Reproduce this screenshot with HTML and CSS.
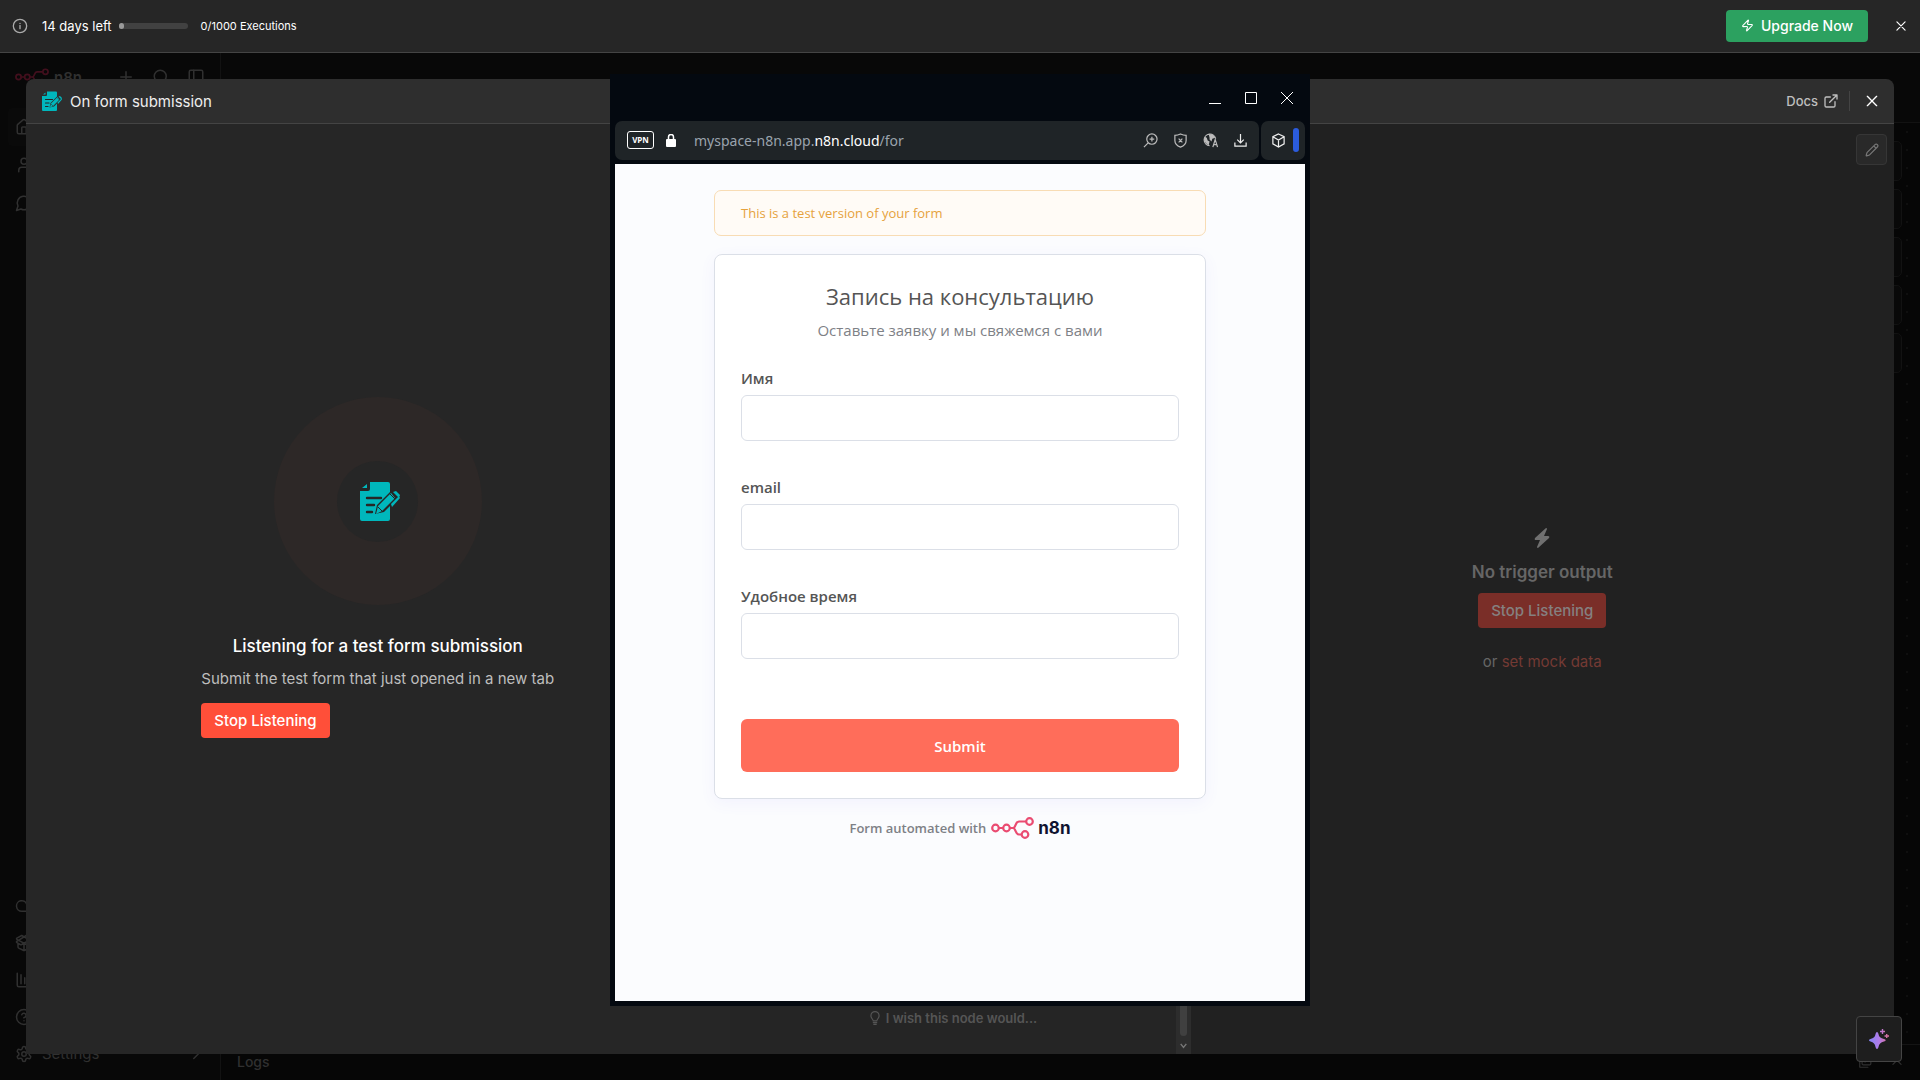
FILE: index.html
```html
<!DOCTYPE html>
<html lang="en">
<head>
    <meta charset="UTF-8">
    <meta name="viewport" content="width=device-width, initial-scale=1.0">
    <title>n8n</title>
    <link rel="stylesheet" href="styles.css">
</head>
<body>
    <!-- shared icons -->
    <svg class="sprite" aria-hidden="true">
        <symbol id="form-icon" viewBox="0 0 40 40">
            <path fill="#00b7bc" d="M10 1h18a2 2 0 0 1 2 2v8L17 24l-2 9 9-2 6-6v13a2 2 0 0 1-2 2H2a2 2 0 0 1-2-2V10h8a2 2 0 0 0 2-2zM7 3v4H2z"/>
            <path class="form-lines" d="M7 17h14M7 24h7M7 31h5" stroke-width="2.400" stroke-linecap="round"/>
            <path fill="#00b7bc" d="M31 12l4 5-13 13-6 3 2-8zM33 11l3-1 4 4-1 3zM31 23l8-8 1 2-8 9z"/>
            <path class="form-lines" d="M18 26l4 4M30 13l5 5" stroke-width="1"/>
        </symbol>
        <symbol id="n8n-mark" viewBox="0 0 43 22">
            <g fill="none" stroke="currentColor" stroke-width="2.200">
                <circle cx="4.500" cy="11" r="3.300"/>
                <circle cx="15.500" cy="11" r="3.300"/>
                <circle cx="38.500" cy="4.500" r="3.300"/>
                <circle cx="34" cy="17.500" r="3.300"/>
                <path d="M8 11h4M19 11h3c3 0 2-6.500 6-6.500h7M22 11c3 0 2 6.500 6 6.500h2.500"/>
            </g>
        </symbol>
        <symbol id="close" viewBox="0 0 24 24">
            <path d="M5 5l14 14M19 5L5 19"/>
        </symbol>
    </svg>

    <div class="trial-banner">
        <svg class="icon info" viewBox="0 0 24 24"><circle cx="12" cy="12" r="10"/><path d="M12 16v-5M12 8v.1"/></svg>
        <span class="days">14 days left</span>
        <span class="progress"><span class="progress-value"></span></span>
        <span class="executions">0/1000 Executions</span>
        <button class="upgrade"><svg class="icon" viewBox="0 0 24 24"><path d="M4 14a1 1 0 0 1-.8-1.600L13 2.300a.5.5 0 0 1 .9.500L12 8.800a1 1 0 0 0 1 1.200h7a1 1 0 0 1 .8 1.600L11 21.700a.5.5 0 0 1-.9-.500l1.900-6a1 1 0 0 0-1-1.200z"/></svg>Upgrade Now</button>
        <button class="plain banner-close" aria-label="Close"><svg class="icon"><use href="#close"/></svg></button>
    </div>

    <div class="app">
        <nav class="sidebar">
            <div class="sidebar-head">
                <svg class="side-logo"><use href="#n8n-mark"/></svg>
                <span class="side-name">n8n</span>
                <svg class="icon" viewBox="0 0 24 24"><path d="M5 12h14M12 5v14"/></svg>
                <svg class="icon" viewBox="0 0 24 24"><circle cx="11" cy="11" r="8"/><path d="M21 21l-4.300-4.300"/></svg>
                <svg class="icon" viewBox="0 0 24 24"><rect x="3" y="3" width="18" height="18" rx="2"/><path d="M9 3v18"/></svg>
            </div>
            <a href="#" class="side-item active" aria-label="Overview"><svg class="icon" viewBox="0 0 24 24"><path d="M15 21v-8a1 1 0 0 0-1-1h-4a1 1 0 0 0-1 1v8M3 10a2 2 0 0 1 .7-1.500l7-6a2 2 0 0 1 2.600 0l7 6a2 2 0 0 1 .7 1.500v9a2 2 0 0 1-2 2H5a2 2 0 0 1-2-2z"/></svg></a>
            <a href="#" class="side-item" aria-label="Personal"><svg class="icon" viewBox="0 0 24 24"><circle cx="12" cy="7" r="4"/><path d="M19 21v-2a4 4 0 0 0-4-4H9a4 4 0 0 0-4 4v2"/></svg></a>
            <a href="#" class="side-item" aria-label="Chat"><svg class="icon" viewBox="0 0 24 24"><path d="M7.900 20A9 9 0 1 0 4 16.100L2 22z"/></svg></a>
            <a href="#" class="side-item first-bottom" aria-label="Admin Panel"><svg class="icon" viewBox="0 0 24 24"><path d="M17.500 19H9a7 7 0 1 1 6.700-9h1.800a4.500 4.500 0 1 1 0 9z"/></svg></a>
            <a href="#" class="side-item" aria-label="Templates"><svg class="icon" viewBox="0 0 24 24"><path d="M12 22v-9M15 2l6 3.500a1 1 0 0 1 0 1.700L8.800 14a2 2 0 0 1-1.700 0L2.500 11.500a1 1 0 0 1 0-1.800zM20 13v4a2 2 0 0 1-1 1.800L13 21.700a2 2 0 0 1-2 0L5 18.800A2 2 0 0 1 4 17v-4M9 2L2.500 5.500a1 1 0 0 0 0 1.700L15 14l6.500-3a1 1 0 0 0 0-1.700z"/></svg></a>
            <a href="#" class="side-item" aria-label="Insights"><svg class="icon" viewBox="0 0 24 24"><path d="M3 3v16a2 2 0 0 0 2 2h16M8 17V5M13 17V9M18 17v-3"/></svg></a>
            <a href="#" class="side-item" aria-label="Help"><svg class="icon" viewBox="0 0 24 24"><circle cx="12" cy="12" r="10"/><path d="M9 9a3 3 0 0 1 5.800 1c0 2-3 3-3 3M12 17v.1"/></svg></a>
            <a href="#" class="side-item"><svg class="icon" viewBox="0 0 24 24"><path d="M12.200 2h-.4a2 2 0 0 0-2 2v.2a2 2 0 0 1-1 1.700l-.4.300a2 2 0 0 1-2 0l-.2-.100a2 2 0 0 0-2.700.700l-.2.400a2 2 0 0 0 .7 2.700l.2.100a2 2 0 0 1 1 1.700v.6a2 2 0 0 1-1 1.700l-.2.100a2 2 0 0 0-.7 2.700l.2.400a2 2 0 0 0 2.700.700l.2-.100a2 2 0 0 1 2 0l.4.300a2 2 0 0 1 1 1.700v.2a2 2 0 0 0 2 2h.4a2 2 0 0 0 2-2v-.2a2 2 0 0 1 1-1.700l.4-.300a2 2 0 0 1 2 0l.2.100a2 2 0 0 0 2.700-.700l.2-.400a2 2 0 0 0-.7-2.700l-.2-.100a2 2 0 0 1-1-1.700v-.6a2 2 0 0 1 1-1.700l.2-.100a2 2 0 0 0 .7-2.700l-.2-.400a2 2 0 0 0-2.700-.700l-.2.100a2 2 0 0 1-2 0l-.4-.300a2 2 0 0 1-1-1.700V4a2 2 0 0 0-2-2z"/><circle cx="12" cy="12" r="3"/></svg>Settings<svg class="icon chevron" viewBox="0 0 24 24"><path d="M9 18l6-6-6-6"/></svg></a>
        </nav>
        <main class="workflow">
            <div class="workflow-head"></div>
            <div class="canvas">
                <span class="canvas-btn"></span>
                <span class="canvas-btn"></span>
                <span class="canvas-btn"></span>
                <span class="canvas-btn"></span>
                <span class="canvas-btn"></span>
            </div>
            <div class="logs">
                <span>Logs</span>
                <svg class="icon" viewBox="0 0 24 24"><rect x="7" y="2" width="15" height="15" rx="2"/><path d="M3 7v13a1 1 0 0 0 1 1h13M12 12l6-6M13 6h5v5"/></svg>
                <svg class="icon" viewBox="0 0 24 24"><path d="M5 16l7-7 7 7"/></svg>
            </div>
        </main>

        <section class="node-modal">
            <header class="node-head">
                <svg class="node-icon"><use href="#form-icon"/></svg>
                <h1>On form submission</h1>
                <a href="#" class="docs">Docs <svg class="icon" viewBox="0 0 24 24"><path d="M15 3h6v6M10 14L21 3M18 13v6a2 2 0 0 1-2 2H5a2 2 0 0 1-2-2V8a2 2 0 0 1 2-2h6"/></svg></a>
                <button class="plain node-close" aria-label="Close"><svg class="icon"><use href="#close"/></svg></button>
            </header>
            <div class="panels">
                <div class="panel input-panel">
                    <div class="pulse"><div class="pulse-inner"><svg class="pulse-icon"><use href="#form-icon"/></svg></div></div>
                    <div class="listening">
                        <h2>Listening for a test form submission</h2>
                        <p>Submit the test form that just opened in a new tab</p>
                        <button class="stop">Stop Listening</button>
                    </div>
                </div>
                <div class="panel params-panel">
                    <a href="#" class="wish"><svg class="icon" viewBox="0 0 24 24"><path d="M9 17c0-3-4-4-4-9a7 7 0 0 1 14 0c0 5-4 6-4 9zM9 20h6M10 23h4"/></svg>I wish this node would...</a>
                    <div class="scrollbar">
                        <span class="thumb"></span>
                        <svg class="scroll-arrow" viewBox="0 0 10 10"><path d="M1 2l4 5 4-5"/></svg>
                    </div>
                </div>
                <div class="panel output-panel">
                    <button class="edit" aria-label="Edit output"><svg class="icon" viewBox="0 0 24 24"><path d="M21.200 6.800a1 1 0 0 0-4-4L3.800 16.200a2 2 0 0 0-.5.800L2 21.400a.5.5 0 0 0 .6.600L7 20.700a2 2 0 0 0 .8-.500zM15 5l4 4"/></svg></button>
                    <div class="no-output">
                        <svg class="bolt" viewBox="0 0 16 20"><path d="M12 0L1 10q-1 2 1 2h4l-3 7q0 1 1 1L15 10q1-2-1-2h-4l3-7q0-1-1-1z"/></svg>
                        <h2>No trigger output</h2>
                        <button class="stop">Stop Listening</button>
                        <p>or <a href="#">set mock data</a></p>
                    </div>
                </div>
            </div>
        </section>

        <button class="assistant" aria-label="Assistant">
            <svg viewBox="0 0 20 20">
                <defs>
                    <linearGradient id="ai" x1="0" y1="0" x2="20" y2="0" gradientUnits="userSpaceOnUse">
                        <stop offset="0" stop-color="#8585f5"/>
                        <stop offset=".5" stop-color="#b07be8"/>
                        <stop offset="1" stop-color="#dc6f91"/>
                    </linearGradient>
                </defs>
                <path fill="url(#ai)" d="M8 3q1 0 1.300 1.500Q10 9 15 10q1.700.5 1.700 1.200T15 12.500Q10 13.500 9.500 18q-.5 2-1.500 2t-1.500-2Q6 13.500 1.500 12.500 0 12 0 11.300T1.500 10Q6 9 6.700 4.500 7 3 8 3zM12.800 0h1.400v1.800H16v1.400h-1.800V5h-1.400V3.200H11V1.800h1.800zM17 5h1.400v1.300H20v1.400h-1.600V9H17V7.700h-1.500V6.300H17z"/>
            </svg>
        </button>
    </div>

    <!-- popup browser window -->
    <div class="browser">
        <div class="titlebar">
            <button class="plain" aria-label="Minimize"><svg viewBox="0 0 12 12"><path d="M0 11.500h12"/></svg></button>
            <button class="plain" aria-label="Maximize"><svg viewBox="0 0 12 12"><path d="M.5.500h11v11H.5z"/></svg></button>
            <button class="plain" aria-label="Close window"><svg viewBox="0 0 12 12"><path d="M0 0l12 12M12 0L0 12"/></svg></button>
        </div>
        <div class="toolbar">
            <div class="address">
                <span class="vpn">VPN</span>
                <svg class="lock" viewBox="0 0 10 13"><rect y="5" width="10" height="8" rx="1"/><path d="M2.500 6V3a2.500 2.500 0 0 1 5 0v3"/></svg>
                <span class="url">myspace-n8n.app.<b>n8n.cloud</b>/for</span>
                <svg class="tool" viewBox="0 0 16 16"><circle cx="9.500" cy="6.500" r="5.500"/><path d="M5.500 10.500L1 15M7 6.500h5M9.500 4v5"/></svg>
                <svg class="tool" viewBox="0 0 16 16"><path d="M8 1q3 1.500 6 1.500V8q0 5-6 7-6-2-6-7V2.500Q5 2.500 8 1zM6 6l4 4M10 6l-4 4"/></svg>
                <svg class="tool" viewBox="0 0 16 16"><path d="M13.500 6A6.200 6.200 0 1 0 7 13.500M10.500 15l2.500-8 2.500 8M11 12.500h4"/><path class="solid" d="M2 4l2 1 1 3 2 1-1 4-3-2-2-4zM6 1l5 1 2 3-3 1-1 3-2-2V5z"/></svg>
                <svg class="tool bright" viewBox="0 0 16 16"><path d="M8 1v9M4.500 7L8 10.500 11.500 7M2 10v4h12v-4"/></svg>
            </div>
            <div class="extensions">
                <svg class="tool bright" viewBox="0 0 16 16"><path d="M8 1l6 3v7.500L8 15l-6-3.500V4zM2 4l6 3.500L14 4M8 7.500V15"/></svg>
                <span class="ext-bar"></span>
            </div>
        </div>
        <div class="page">
            <div class="test-notice">This is a test version of your form</div>
            <form class="card" lang="ru">
                <h2>Запись на консультацию</h2>
                <p class="subtitle">Оставьте заявку и мы свяжемся с вами</p>
                <div class="field">
                    <label for="name">Имя</label>
                    <input type="text" id="name">
                </div>
                <div class="field">
                    <label for="email">email</label>
                    <input type="text" id="email">
                </div>
                <div class="field">
                    <label for="time">Удобное время</label>
                    <input type="text" id="time">
                </div>
                <button type="button" class="submit">Submit</button>
            </form>
            <a href="#" class="powered">Form automated with <svg class="powered-logo"><use href="#n8n-mark"/></svg><span>n8n</span></a>
        </div>
    </div>
</body>
</html>
```

FILE: styles.css
```css
* {
    margin: 0;
    padding: 0;
    box-sizing: border-box;
}
body {
    font-family: Inter, sans-serif;
    font-size: 15px;
    background: #070707;
    color: #fff;
    display: flex;
    flex-direction: column;
    height: 100vh;
    overflow: hidden;
    position: relative;
}
a {
    color: inherit;
    text-decoration: none;
}
button {
    font-family: inherit;
    border: none;
    cursor: pointer;
}
.plain {
    background: none;
    color: inherit;
    display: flex;
}
.sprite {
    position: absolute;
    width: 0;
    height: 0;
}
.icon {
    width: 18px;
    height: 18px;
    flex: none;
    fill: none;
    stroke: currentColor;
    stroke-width: 2;
    stroke-linecap: round;
    stroke-linejoin: round;
}

/* trial banner */
.trial-banner {
    height: 53px;
    flex: none;
    background: #262626;
    border-bottom: 1px solid #444;
    display: flex;
    align-items: center;
    padding: 0 12px 1px;
}
.info {
    width: 16px;
    height: 16px;
    color: #aaa;
    margin-right: 14px;
}
.days {
    font-size: 13px;
    margin-right: 7px;
}
.progress {
    width: 69px;
    height: 6px;
    border-radius: 3px;
    background: #414141;
    margin-right: 13px;
}
.progress-value {
    display: block;
    width: 5px;
    height: 6px;
    border-radius: 3px;
    background: #999;
}
.executions {
    font-size: 11px;
}
.upgrade {
    height: 32px;
    margin-left: auto;
    padding: 0 15px;
    border-radius: 4px;
    background: #2ca160;
    color: #fff;
    font-size: 14px;
    font-weight: 500;
    display: flex;
    align-items: center;
    gap: 7px;
}
.upgrade .icon {
    width: 13px;
    height: 13px;
}
.banner-close {
    margin-left: 26px;
}
.banner-close .icon {
    width: 14px;
    height: 14px;
}

/* dimmed editor behind the modal */
.app {
    flex: 1;
    display: flex;
    min-height: 0;
    position: relative;
    color: #303030;
}
.sidebar {
    width: 221px;
    background: #080808;
    border-right: 1px solid #121212;
    display: flex;
    flex-direction: column;
    padding-bottom: 8px;
}
.sidebar-head {
    height: 48px;
    margin-bottom: 7px;
    padding: 0 15px;
    display: flex;
    align-items: center;
    gap: 17px;
}
.side-logo {
    width: 34px;
    height: 18px;
    color: #420f1d;
}
.side-name {
    font-weight: 600;
    margin-left: -12px;
    margin-right: auto;
}
.side-item {
    height: 38px;
    margin: 0 8px;
    padding: 0 7px;
    display: flex;
    align-items: center;
    gap: 9px;
}
.active {
    background: #0a0a0a;
    border-radius: 4px;
}
.first-bottom {
    margin-top: auto;
}
.first-bottom,
.first-bottom ~ .side-item {
    height: 37px;
}
.chevron {
    margin-left: auto;
}
.workflow {
    flex: 1;
    display: flex;
    flex-direction: column;
}
.workflow-head {
    height: 70px;
    background: #080808;
    border-bottom: 1px solid #121212;
}
.canvas {
    flex: 1;
    background: #060606 radial-gradient(#0f0f0f 1px, transparent 1px) 3px 0 / 18px 18px;
    display: flex;
    flex-direction: column;
    align-items: flex-end;
    gap: 8px;
    padding: 18px;
}
.canvas-btn {
    width: 40px;
    height: 40px;
    background: #090909;
    border: 1px solid #121212;
    border-radius: 5px;
}
.logs {
    height: 36px;
    padding: 0 16px 2px;
    background: #060606;
    border-top: 1px solid #141414;
    display: flex;
    align-items: center;
    gap: 18px;
    font-size: 14px;
    font-weight: 500;
}
.logs span {
    margin-right: auto;
}
.logs .icon {
    width: 14px;
    height: 14px;
}

/* node details */
.node-modal {
    position: absolute;
    inset: 26px;
    border-radius: 8px 8px 0 0;
    overflow: hidden;
    display: flex;
    flex-direction: column;
}
.node-head {
    height: 45px;
    flex: none;
    background: #2e2e2e;
    border-bottom: 1px solid #444;
    display: flex;
    align-items: center;
    padding: 0 14px 0 16px;
}
.form-lines {
    fill: none;
    stroke: #262626;
}
.node-icon {
    width: 20px;
    height: 20px;
    margin-right: 8px;
}
.node-head h1 {
    font-size: 15px;
    font-weight: 400;
    color: #eee;
}
.docs {
    margin-left: auto;
    padding-right: 10px;
    border-right: 1px solid #444;
    height: 20px;
    display: flex;
    align-items: center;
    gap: 5px;
    font-size: 13px;
    font-weight: 500;
    color: #bebebe;
}
.docs .icon {
    width: 16px;
    height: 16px;
}
.node-close {
    color: #fff;
    margin-left: 14px;
}
.node-close .icon {
    width: 16px;
    height: 16px;
}
.panels {
    flex: 1;
    display: grid;
    grid-template-columns: 1fr 461px 1fr;
}
.panel {
    display: flex;
    flex-direction: column;
    align-items: center;
    justify-content: center;
    position: relative;
}
.input-panel {
    background: #262626;
    padding-bottom: 43px;
}
.pulse {
    width: 208px;
    height: 208px;
    border-radius: 50%;
    background: #2d2827;
    display: flex;
    align-items: center;
    justify-content: center;
    margin-bottom: 28px;
}
.pulse-inner {
    width: 81px;
    height: 81px;
    border-radius: 50%;
    background: #262626;
    display: flex;
    align-items: center;
    justify-content: center;
    padding-left: 4px;
}
.pulse-icon {
    width: 40px;
    height: 40px;
}
.listening h2 {
    font-size: 17px;
    font-weight: 500;
    line-height: 26px;
    text-align: center;
    margin-bottom: 8px;
    color: #fff;
}
.listening p {
    line-height: 24px;
    margin-bottom: 12px;
    color: #bebebe;
}
.stop {
    height: 35px;
    padding: 0 13px;
    border-radius: 4px;
    background: #ff4f39;
    color: #fff;
    font-size: 15px;
    font-weight: 500;
}
.params-panel {
    background: #252525;
    justify-content: flex-end;
}
.wish {
    display: flex;
    align-items: center;
    gap: 4px;
    margin: 0 15px 26px 0;
    font-size: 13px;
    font-weight: 600;
    line-height: 20px;
    color: #555;
}
.wish .icon {
    width: 14px;
    height: 14px;
}
.scrollbar {
    position: absolute;
    top: 0;
    right: 0;
    bottom: 0;
    width: 15px;
    padding: 4px;
    background: #2d2d2d;
    display: flex;
    flex-direction: column;
    gap: 6px;
}
.thumb {
    flex: 1;
    border-radius: 4px;
    background: #404040;
}
.scroll-arrow {
    height: 8px;
    fill: none;
    stroke: #777;
    stroke-width: 2;
}
.output-panel {
    background: #212121;
}
.edit {
    position: absolute;
    top: 10px;
    right: 7px;
    width: 31px;
    height: 31px;
    border: 1px solid #363636;
    border-radius: 4px;
    background: #292929;
    color: #777;
    display: flex;
    align-items: center;
    justify-content: center;
}
.edit .icon {
    width: 14px;
    height: 14px;
}
.no-output {
    display: flex;
    flex-direction: column;
    align-items: center;
    padding-top: 24px;
    color: #666;
}
.bolt {
    width: 16px;
    height: 20px;
    margin-bottom: 12px;
    fill: #707070;
}
.no-output h2 {
    font-size: 17px;
    font-weight: 600;
    line-height: 24px;
    margin-bottom: 9px;
}
.no-output .stop {
    background: #7a2e28;
    color: #858080;
}
.no-output p {
    line-height: 24px;
    margin-top: 22px;
}
.no-output a {
    color: #743a34;
}
.assistant {
    position: absolute;
    right: 18px;
    bottom: 18px;
    width: 46px;
    height: 46px;
    border: 1px solid #444;
    border-radius: 4px;
    background: #1e1e1e;
    display: flex;
    align-items: center;
    justify-content: center;
}
.assistant svg {
    width: 20px;
    height: 20px;
}

/* browser popup */
.browser {
    position: absolute;
    inset: 74px 0;
    width: 700px;
    margin: 0 auto;
    padding: 0 5px 5px;
    background: #040910;
    display: flex;
    flex-direction: column;
    font-family: "Open Sans", "Noto Sans", sans-serif;
}
.titlebar {
    height: 47px;
    flex: none;
    display: flex;
    justify-content: flex-end;
    align-items: center;
    gap: 24px;
    padding: 1px 12px 0 0;
}
.titlebar svg {
    width: 12px;
    height: 12px;
    fill: none;
    stroke: #fff;
}
.toolbar {
    height: 39px;
    margin-bottom: 4px;
    flex: none;
    display: flex;
    gap: 2px;
}
.address,
.extensions {
    background: #1f2427;
    border-radius: 7px;
    display: flex;
    align-items: center;
}
.address {
    flex: 1;
    padding: 0 11px 1px 12px;
}
.extensions {
    gap: 7px;
    padding: 0 6px 1px 10px;
}
.vpn {
    width: 27px;
    height: 18px;
    border: 1px solid #fff;
    border-radius: 3px;
    font-size: 8px;
    font-weight: 700;
    line-height: 16px;
    text-align: center;
}
.lock {
    width: 10px;
    height: 13px;
    margin: 0 18px 0 12px;
    fill: #fff;
}
.lock path {
    fill: none;
    stroke: #fff;
    stroke-width: 1.5;
}
.url {
    flex: 1;
    font-family: "Noto Sans", sans-serif;
    font-size: 14px;
    color: #9aa3ad;
}
.url b {
    font-weight: 400;
    color: #fff;
}
.tool {
    width: 15px;
    height: 15px;
    flex: none;
    fill: none;
    stroke: #bbb;
    stroke-width: 1.3;
}
.tool + .tool {
    margin-left: 15px;
}
.bright {
    stroke: #eee;
}
.solid {
    fill: #bbb;
    stroke: none;
}
.ext-bar {
    width: 6px;
    height: 24px;
    border-radius: 3px;
    background: #2b5cde;
}
.page {
    flex: 1;
    background: #fbfcfe;
    padding: 26px 99px;
    display: flex;
    flex-direction: column;
    align-items: center;
}
.test-notice {
    width: 100%;
    padding: 12px 26px;
    margin-bottom: 18px;
    border: 1px solid #f8dcb4;
    border-radius: 7px;
    background: #fffbf6;
    color: #e6a23d;
    font-size: 13px;
    line-height: 20px;
}
.card {
    width: 100%;
    padding: 26px;
    border: 1px solid #dbdfe7;
    border-radius: 8px;
    background: #fff;
    box-shadow: 0 4px 16px rgba(99, 77, 255, 0.06);
    display: flex;
    flex-direction: column;
}
.card h2 {
    font-size: 22px;
    font-weight: 400;
    line-height: 30px;
    text-align: center;
    color: #555;
    margin-bottom: 8px;
}
.subtitle {
    font-size: 15px;
    line-height: 22px;
    text-align: center;
    color: #7e8186;
    margin-bottom: 26px;
}
.field {
    display: flex;
    flex-direction: column;
    margin-bottom: 35px;
}
.field label {
    font-size: 15px;
    font-weight: 600;
    line-height: 22px;
    color: #555;
    margin-bottom: 6px;
}
.field input {
    height: 46px;
    padding: 0 12px;
    border: 1px solid #dbdfe7;
    border-radius: 6px;
    background: #fff;
    font: inherit;
}
.submit {
    height: 53px;
    margin-top: 25px;
    border-radius: 6px;
    background: #ff6d5a;
    color: #fff;
    font-size: 15px;
    font-weight: 600;
}
.powered {
    display: flex;
    align-items: center;
    margin-top: 18px;
    font-size: 13px;
    font-weight: 600;
    color: #7e8186;
}
.powered-logo {
    width: 43px;
    height: 22px;
    margin: 0 4px 0 5px;
    color: #ea4b71;
}
.powered span {
    font-family: Inter, sans-serif;
    font-size: 17px;
    font-weight: 700;
    color: #101330;
}
```
